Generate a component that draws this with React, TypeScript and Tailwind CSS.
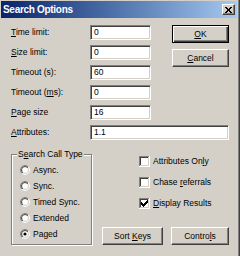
import React from "react";

function Acc({ text, i }: { text: string; i: number }) {
  if (i < 0) return <span>{text}</span>;
  return (
    <span>
      {text.slice(0, i)}
      <u className="underline decoration-1 underline-offset-[1px]">{text[i]}</u>
      {text.slice(i + 1)}
    </span>
  );
}

function Field({ value, className }: { value: string; className: string }) {
  return (
    <div
      className={
        "h-[15px] bg-white border border-t-[#808080] border-l-[#808080] border-b-white border-r-white shadow-[inset_1px_1px_0_#404040,inset_-1px_-1px_0_#d4d0c8] flex items-center pl-[3px] " +
        className
      }
    >
      {value}
    </div>
  );
}

function Btn({ children, className }: { children: React.ReactNode; className: string }) {
  return (
    <div
      className={
        "h-[18px] flex items-center justify-center border border-t-white border-l-white border-b-[#404040] border-r-[#404040] shadow-[inset_-1px_-1px_0_#808080] " +
        className
      }
    >
      {children}
    </div>
  );
}

function Radio({ checked }: { checked?: boolean }) {
  return (
    <svg width="10" height="10" viewBox="0 0 10 10" className="shrink-0">
      <defs>
        <linearGradient id="ro" x1="0" y1="0" x2="1" y2="1">
          <stop offset="0.5" stopColor="#808080" />
          <stop offset="0.5" stopColor="#ffffff" />
        </linearGradient>
        <linearGradient id="ri" x1="0" y1="0" x2="1" y2="1">
          <stop offset="0.5" stopColor="#404040" />
          <stop offset="0.5" stopColor="#d4d0c8" />
        </linearGradient>
      </defs>
      <circle cx="5" cy="5" r="4.5" fill="none" stroke="url(#ro)" strokeWidth="1" />
      <circle cx="5" cy="5" r="3.5" fill="#fff" stroke="url(#ri)" strokeWidth="1" />
      {checked && <circle cx="5" cy="5" r="1.6" fill="#000" />}
    </svg>
  );
}

function Check({ checked }: { checked?: boolean }) {
  return (
    <svg width="11" height="11" viewBox="0 0 11 11" shapeRendering="crispEdges" className="shrink-0">
      <rect x="0" y="0" width="11" height="11" fill="#ffffff" />
      <rect x="0" y="0" width="10" height="10" fill="#808080" />
      <rect x="1" y="1" width="9" height="9" fill="#d4d0c8" />
      <rect x="1" y="1" width="8" height="8" fill="#404040" />
      <rect x="2" y="2" width="7" height="7" fill="#ffffff" />
      {checked && (
        <path
          fill="#000"
          d="M8 2h1v1h-1z M7 3h2v1h-2z M2 4h1v1h-1z M6 4h3v1h-3z M2 5h2v1h-2z M5 5h3v1h-3z M2 6h5v1h-5z M3 7h3v1h-3z M4 8h1v1h-1z"
        />
      )}
    </svg>
  );
}

export default function App() {
  const rows: { label: string; i: number; value: string }[] = [
    { label: "Time limit:", i: 0, value: "0" },
    { label: "Size limit:", i: 0, value: "0" },
    { label: "Timeout (s):", i: -1, value: "60" },
    { label: "Timeout (ms):", i: 9, value: "0" },
    { label: "Page size", i: 0, value: "16" },
  ];
  const radios = ["Async.", "Sync.", "Timed Sync.", "Extended", "Paged"];
  const checks: { label: string; i: number; checked?: boolean }[] = [
    { label: "Attributes Only", i: 13 },
    { label: "Chase referrals", i: 6 },
    { label: "Display Results", i: 0, checked: true },
  ];
  return (
    <div className="w-[240px] h-[256px] overflow-hidden bg-[#404040] pr-px font-['Liberation_Sans',Arial,sans-serif] text-[8.5px] leading-none text-black">
      <div className="h-full bg-[#808080] pr-px">
        <div className="h-full bg-[#d4d0c8] p-px flex flex-col">
          <div className="h-[17px] shrink-0 flex items-center bg-linear-to-r from-[#0a246a] to-[#a6caf0] pl-[2px] pr-[2px]">
            <span className="text-white font-bold text-[10px] tracking-[-0.3px]">Search Options</span>
            <div className="ml-auto w-[13px] h-[11px] bg-[#d4d0c8] border border-t-white border-l-white border-b-[#404040] border-r-[#404040] shadow-[inset_-1px_-1px_0_#808080] flex items-center justify-center">
              <svg width="7" height="6" viewBox="0 0 7 6" shapeRendering="crispEdges">
                <path
                  fill="#000"
                  d="M0 0h2v1h-2z M5 0h2v1h-2z M1 1h2v1h-2z M4 1h2v1h-2z M2 2h3v1h-3z M2 3h3v1h-3z M1 4h2v1h-2z M4 4h2v1h-2z M0 5h2v1h-2z M5 5h2v1h-2z"
                />
              </svg>
            </div>
          </div>

          <div className="pl-[10px] pr-[8px] pt-[7px] flex flex-col">
            <div className="flex">
              <div className="flex flex-col gap-[5px]">
                {rows.map((r) => (
                  <div key={r.label} className="flex items-center h-[15px]">
                    <span className="w-[79px]">
                      <Acc text={r.label} i={r.i} />
                    </span>
                    <Field value={r.value} className="w-[61px]" />
                  </div>
                ))}
              </div>
              <div className="ml-auto flex flex-col">
                <div className="w-[57px] h-[18px] border border-black shadow-[inset_1px_1px_0_#fff,inset_-1px_-1px_0_#404040,inset_-2px_-2px_0_#808080] flex items-center justify-center">
                  <Acc text="OK" i={0} />
                </div>
                <Btn className="w-[57px] mt-[6px]">
                  <Acc text="Cancel" i={0} />
                </Btn>
              </div>
            </div>

            <div className="flex items-center h-[15px] mt-[5px]">
              <span className="w-[79px]">
                <Acc text="Attributes:" i={0} />
              </span>
              <Field value="1.1" className="flex-1" />
            </div>

            <div className="flex">
              <div className="relative mt-[14px] w-[81px] h-[91px] border border-[#808080] shadow-[inset_1px_1px_0_#fff,1px_1px_0_#fff] pl-[8px] pt-[7px] flex flex-col">
                <span className="absolute left-[5px] top-[-6px] bg-[#d4d0c8] px-px leading-[11px]">
                  <Acc text="Search Call Type" i={1} />
                </span>
                {radios.map((r, k) => (
                  <div key={r} className="flex items-center h-[16px] gap-[3px]">
                    <Radio checked={k === 4} />
                    <span>{r}</span>
                  </div>
                ))}
              </div>
              <div className="flex-1 flex flex-col">
                <div className="ml-[47px] mt-[11px] flex flex-col">
                  {checks.map((c) => (
                    <div key={c.label} className="flex items-center h-[21px] gap-[3px]">
                      <Check checked={c.checked} />
                      <Acc text={c.label} i={c.i} />
                    </div>
                  ))}
                </div>
                <div className="flex ml-[10px] mt-[13px] gap-[8px]">
                  <Btn className="w-[61px]">
                    <Acc text="Sort Keys" i={5} />
                  </Btn>
                  <Btn className="w-[58px]">
                    <Acc text="Controls" i={6} />
                  </Btn>
                </div>
              </div>
            </div>
          </div>
        </div>
      </div>
    </div>
  );
}
